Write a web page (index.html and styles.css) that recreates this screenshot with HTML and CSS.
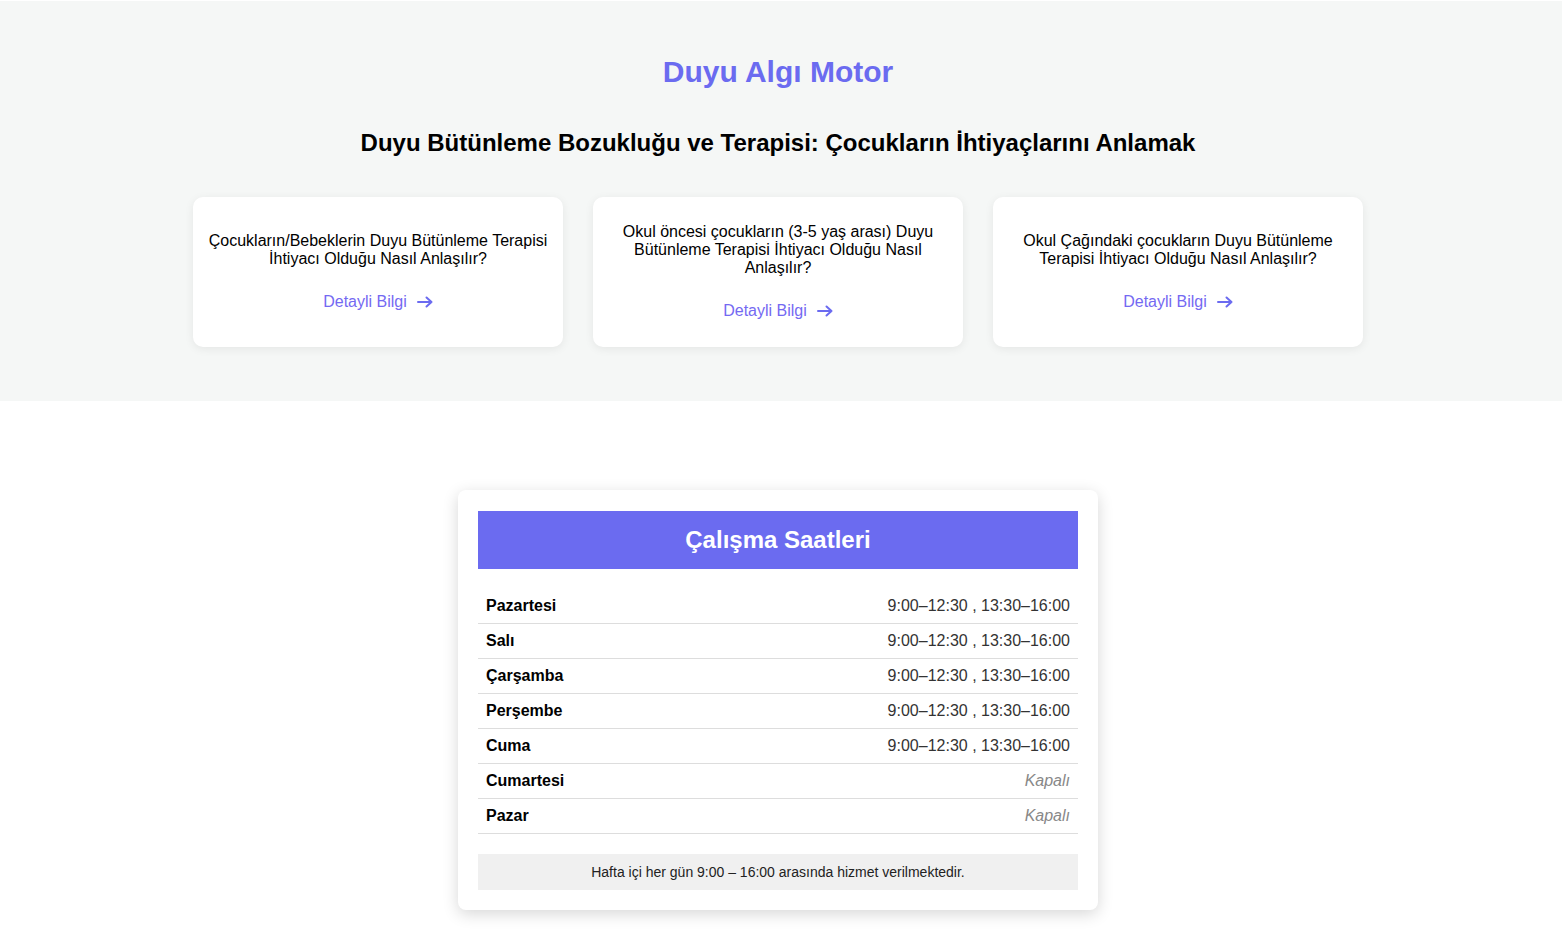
FILE: index.html
```html
<!DOCTYPE html>
<html lang="tr">
<head>
<meta charset="utf-8">
<title>Duyu Algı Motor</title>
<link rel="stylesheet" href="styles.css">
</head>
<body>
<section class="hero">
  <div class="inner">
    <h1 class="brand">Duyu Algı Motor</h1>
    <h2 class="headline">Duyu Bütünleme Bozukluğu ve Terapisi: Çocukların İhtiyaçlarını Anlamak</h2>
    <div class="cards">
      <div class="card">
        <p class="card-text">Çocukların/Bebeklerin Duyu Bütünleme Terapisi İhtiyacı Olduğu Nasıl Anlaşılır?</p>
        <a class="more" href="#">Detayli Bilgi <svg class="arrow" viewBox="0 0 16 12" width="16" height="12"><path d="M1 6H14.5M9.5 1.5L14.5 6L9.5 10.5" fill="none" stroke="#6b6bf0" stroke-width="2" stroke-linecap="round" stroke-linejoin="round"/></svg></a>
      </div>
      <div class="card">
        <p class="card-text">Okul öncesi çocukların (3-5 yaş arası) Duyu Bütünleme Terapisi İhtiyacı Olduğu Nasıl Anlaşılır?</p>
        <a class="more" href="#">Detayli Bilgi <svg class="arrow" viewBox="0 0 16 12" width="16" height="12"><path d="M1 6H14.5M9.5 1.5L14.5 6L9.5 10.5" fill="none" stroke="#6b6bf0" stroke-width="2" stroke-linecap="round" stroke-linejoin="round"/></svg></a>
      </div>
      <div class="card">
        <p class="card-text">Okul Çağındaki çocukların Duyu Bütünleme Terapisi İhtiyacı Olduğu Nasıl Anlaşılır?</p>
        <a class="more" href="#">Detayli Bilgi <svg class="arrow" viewBox="0 0 16 12" width="16" height="12"><path d="M1 6H14.5M9.5 1.5L14.5 6L9.5 10.5" fill="none" stroke="#6b6bf0" stroke-width="2" stroke-linecap="round" stroke-linejoin="round"/></svg></a>
      </div>
    </div>
  </div>
</section>
<section class="hours-section">
  <div class="hours-card">
    <h2 class="hours-title">Çalışma Saatleri</h2>
    <table class="hours">
      <tr><td class="day">Pazartesi</td><td class="time">9:00–12:30 , 13:30–16:00</td></tr>
      <tr><td class="day">Salı</td><td class="time">9:00–12:30 , 13:30–16:00</td></tr>
      <tr><td class="day">Çarşamba</td><td class="time">9:00–12:30 , 13:30–16:00</td></tr>
      <tr><td class="day">Perşembe</td><td class="time">9:00–12:30 , 13:30–16:00</td></tr>
      <tr><td class="day">Cuma</td><td class="time">9:00–12:30 , 13:30–16:00</td></tr>
      <tr><td class="day">Cumartesi</td><td class="time closed">Kapalı</td></tr>
      <tr><td class="day">Pazar</td><td class="time closed">Kapalı</td></tr>
    </table>
    <div class="note">Hafta içi her gün 9:00 – 16:00 arasında hizmet verilmektedir.</div>
  </div>
</section>
</body>
</html>
```

FILE: styles.css
```css
* { box-sizing: border-box; }
html, body {
  margin: 0;
  padding: 0;
  background: #ffffff;
  font-family: "Liberation Sans", Arial, sans-serif;
  color: #000;
}
.hero {
  background: #f5f7f6;
  margin-top: 1px;
  padding: 53px 0 54px;
}
.inner {
  padding-right: 6px;
  display: flex;
  flex-direction: column;
  align-items: center;
}
.brand {
  margin: 0;
  font-size: 30px;
  line-height: 36px;
  font-weight: bold;
  color: #6b6bf0;
  text-align: center;
}
.headline {
  margin: 39px 0 0;
  font-size: 24px;
  line-height: 28px;
  font-weight: bold;
  text-align: center;
}
.cards {
  margin-top: 40px;
  display: flex;
  gap: 30px;
}
.card {
  width: 370px;
  height: 150px;
  background: #fff;
  border-radius: 10px;
  box-shadow: 0 2px 10px rgba(0,0,0,0.07);
  display: flex;
  flex-direction: column;
  justify-content: center;
  align-items: center;
  padding: 0 15px 2px;
  text-align: center;
}
.card-text {
  margin: 0;
  font-size: 16px;
  line-height: 18px;
}
.more {
  margin-top: 25px;
  font-size: 16px;
  line-height: 18px;
  color: #7469f2;
  text-decoration: none;
  display: flex;
  align-items: center;
  gap: 10px;
}
.arrow { display: block; margin-top: 1px; }
.hours-section {
  padding: 89px 6px 27px 0;
  display: flex;
  justify-content: center;
}
.hours-card {
  width: 640px;
  background: #fff;
  border-radius: 8px;
  box-shadow: 0 4px 16px rgba(0,0,0,0.16);
  padding: 21px 20px 20px;
}
.hours-title {
  margin: 0;
  background: #6b6bf0;
  color: #fff;
  font-size: 24px;
  font-weight: bold;
  line-height: 58px;
  text-align: center;
}
.hours {
  width: 100%;
  border-collapse: collapse;
  margin-top: 20px;
}
.hours td {
  padding: 8px;
  font-size: 16px;
  line-height: 18px;
  border-bottom: 1px solid #dddddd;
}
.day { font-weight: bold; text-align: left; }
.time { text-align: right; color: #333; }
.closed { color: #888; font-style: italic; }
.note {
  margin-top: 20px;
  background: #f0f0f0;
  text-align: center;
  font-size: 14px;
  line-height: 36px;
  color: #222;
}
```
